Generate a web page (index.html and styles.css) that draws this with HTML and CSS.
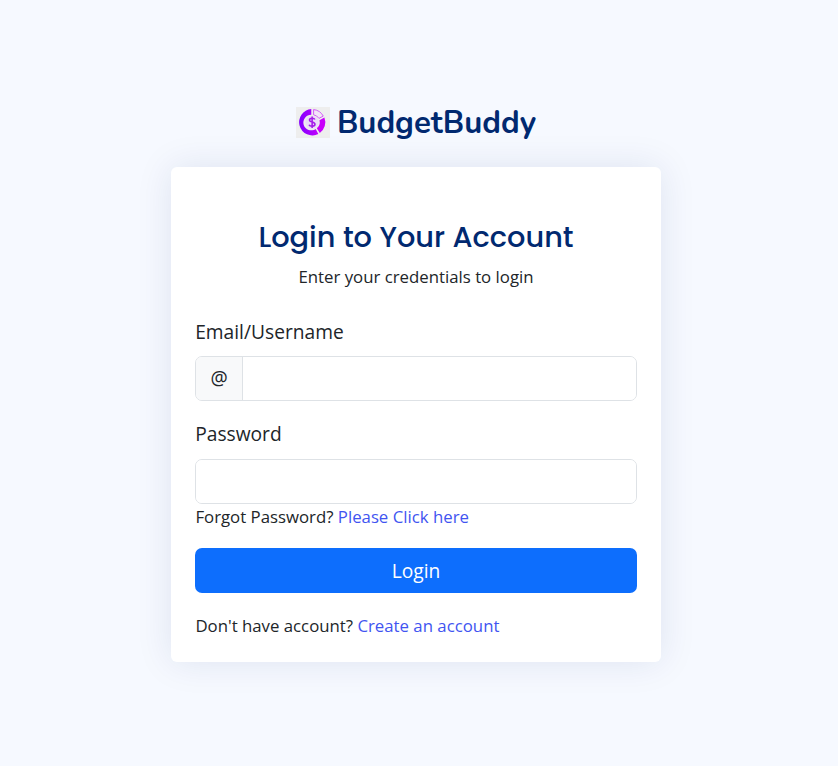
FILE: index.html
```html
<!DOCTYPE html>
<html lang="en">
<head>
<meta charset="utf-8">
<title>BudgetBuddy - Login</title>
<link rel="stylesheet" href="styles.css">
</head>
<body>
<main class="page">
  <a class="brand" href="#">
    <svg class="brand-mark" width="34" height="31" viewBox="0 0 34 31" aria-hidden="true">
      <defs>
        <linearGradient id="ring" x1="0" x2="1"><stop offset="0" stop-color="#8200ff"/><stop offset="1" stop-color="#c000fc"/></linearGradient>
      </defs>
      <rect width="34" height="31" fill="#eee"/>
      <g transform="translate(-1.1 -.8) scale(1.05)">
        <path d="M15.6 2.7A12.6 12.6 0 1 0 22.3 26.5L19.8 21.6A7.4 7.4 0 1 1 15.6 8.2Z" fill="url(#ring)"/>
        <path d="M28.1 10.8A12.6 12.6 0 0 1 23.7 25.6L20.9 20.9A7.4 7.4 0 0 0 23.4 13.4Z" fill="#c900fa"/>
        <path d="M17.8 3.2A12 12 0 0 1 27 9.4L22.9 11.6A7.5 7.5 0 0 0 17.8 8.2Z" fill="#f3e4f8" stroke="#cf55f5" stroke-width=".9"/>
        <circle cx="16.3" cy="15.3" r="6.3" fill="#eadcf8"/>
        <path d="M19 12.7C18.3 11 13.9 11 13.9 13.3C13.9 15.7 19.1 14.6 19.1 17.3C19.1 19.7 14.2 19.7 13.5 17.7M16.4 9.8V20.8" fill="none" stroke="#a51be8" stroke-width="1.5"/>
      </g>
    </svg>
    <span class="brand-name">BudgetBuddy</span>
  </a>
  <section class="card">
    <h1 class="title">Login to Your Account</h1>
    <p class="subtitle">Enter your credentials to login</p>
    <form class="form">
      <label class="label" for="user">Email/Username</label>
      <div class="group">
        <span class="addon">@</span>
        <input class="input" id="user" type="text">
      </div>
      <label class="label" for="password">Password</label>
      <div class="group">
        <input class="input" id="password" type="password">
      </div>
      <p class="note">Forgot Password? <a href="#">Please Click here</a></p>
      <button class="submit" type="button">Login</button>
      <p class="note">Don't have account? <a href="#">Create an account</a></p>
    </form>
  </section>
</main>
</body>
</html>
```
FILE: styles.css
```css
* { box-sizing: border-box; }
body {
  margin: 0;
  background: #f6f9ff;
  color: #212529;
  font-family: "Open Sans", sans-serif;
  font-size: 19.2px;
  line-height: 1.5;
}
a { color: #4154f1; text-decoration: none; }
.page {
  display: flex;
  flex-direction: column;
  align-items: center;
  min-height: 766px;
  padding: 98px 6px 0 0;
}
.brand {
  display: flex;
  align-items: center;
  height: 49px;
  margin-bottom: 20px;
}
.brand-mark { margin-right: 7px; }
.brand-name {
  padding-top: 2px;
  color: #012970;
  font-family: Nunito, Lato, sans-serif;
  font-size: 31.2px;
  font-weight: 700;
  white-space: nowrap;
}
.card {
  width: 490px;
  height: 495px;
  padding: 48px 24px 0;
  border-radius: 6px;
  background: #fff;
  box-shadow: 0 0 36px rgba(1, 41, 112, 0.1);
}
.title {
  margin: 0;
  color: #012970;
  font-family: Poppins, Lato, sans-serif;
  font-size: 28.8px;
  font-weight: 500;
  line-height: 44px;
  text-align: center;
  white-space: nowrap;
}
.subtitle {
  margin: 5px 0 27px;
  font-size: 16.8px;
  line-height: 26px;
  text-align: center;
}
.label {
  display: block;
  margin-bottom: 10px;
  padding-left: 0.2px;
  line-height: 29px;
}
.group {
  display: flex;
  height: 45px;
  margin-bottom: 18px;
  overflow: hidden;
  border: 1px solid #dee2e6;
  border-radius: 7px;
}
.group + .label { margin-bottom: 11px; }
.addon {
  display: flex;
  align-items: center;
  justify-content: center;
  width: 47px;
  border-right: 1px solid #dee2e6;
  background: #f8f9fa;
}
.input {
  flex: 1;
  min-width: 0;
  padding: 0 14px;
  border: 0;
  outline: 0;
  background: #fff;
  font: inherit;
}
.group:has(+ .note) { margin-bottom: 0; }
.note {
  margin: 0;
  padding-left: 0.4px;
  font-size: 16.8px;
  line-height: 26px;
}
.submit {
  display: block;
  width: 100%;
  height: 45px;
  margin: 18px 0 20px;
  padding: 2px 0 0;
  border: 0;
  border-radius: 7px;
  background: #0d6efd;
  color: #fff;
  font: inherit;
}
```
